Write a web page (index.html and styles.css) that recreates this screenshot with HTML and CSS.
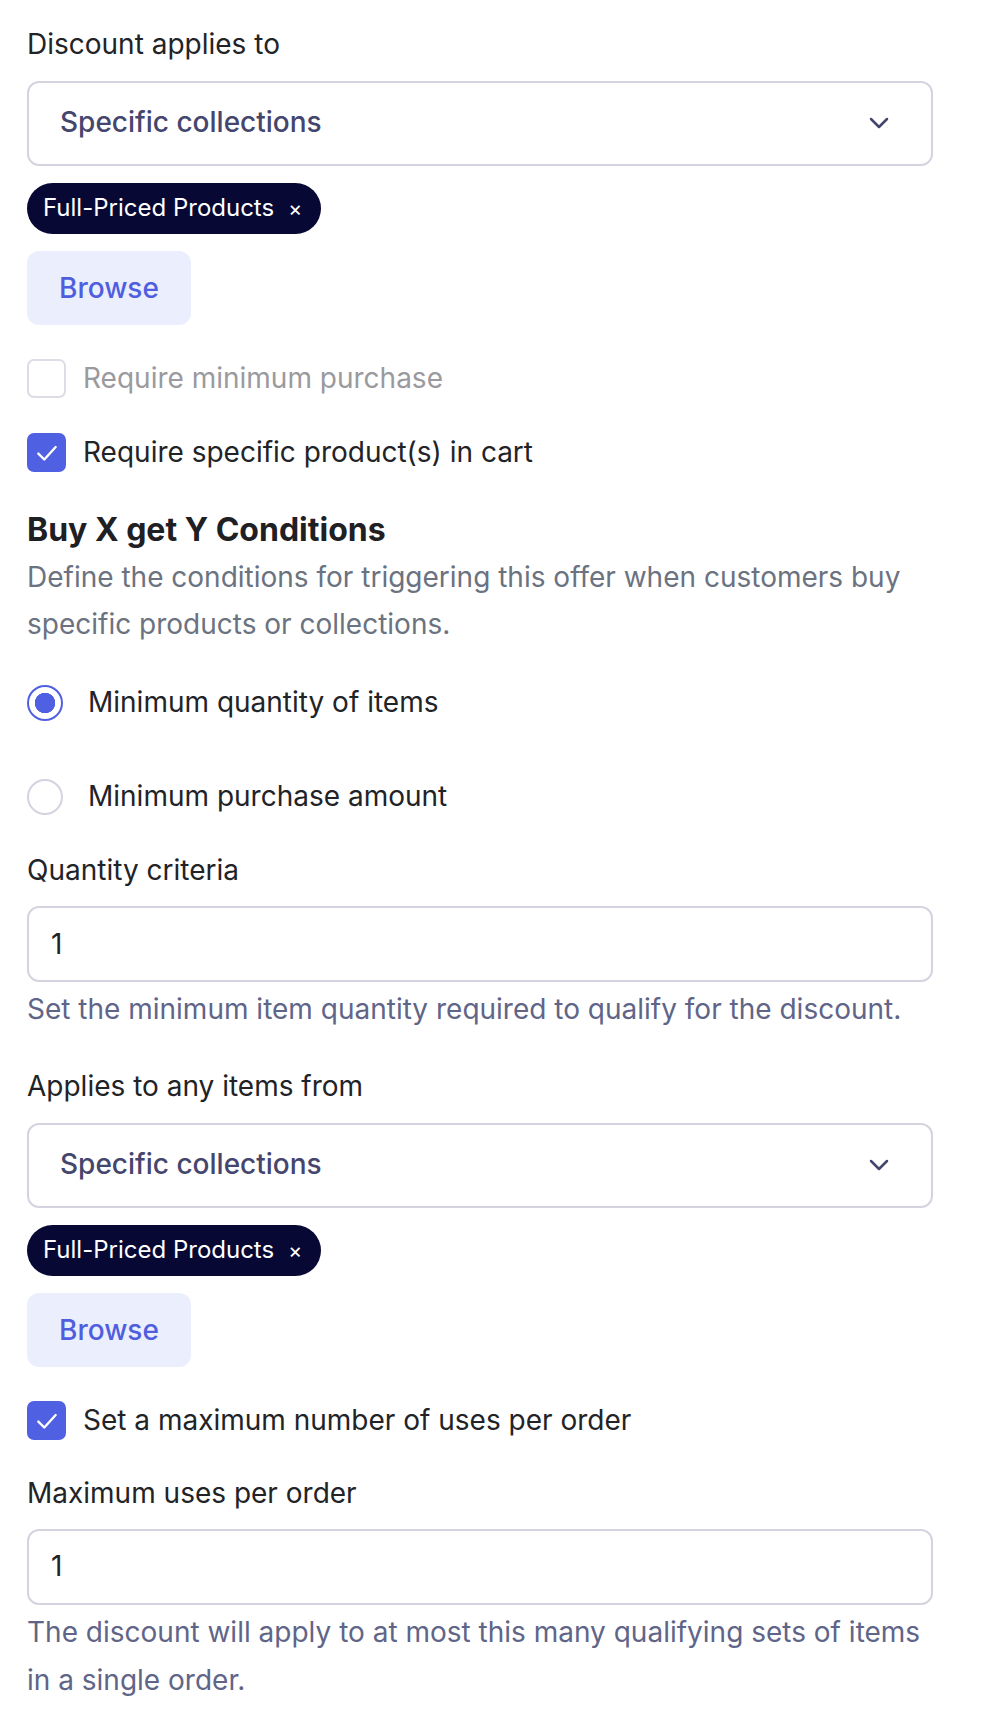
FILE: index.html
```html
<!DOCTYPE html>
<html lang="en">
  <head>
    <meta charset="UTF-8" />
    <meta name="viewport" content="width=device-width, initial-scale=1.0" />
    <title>Discount Conditions</title>
    <link rel="stylesheet" href="styles.css">
  </head>
  <body>
    <form class="form">
      <div class="field">
        <label class="label">Discount applies to</label>
        <div class="select">
          <span class="select-value">Specific collections</span>
          <svg class="chevron" width="20" height="12" viewBox="0 0 20 12">
            <polyline points="2,2 10,10 18,2" />
          </svg>
        </div>
        <div class="tags">
          <span class="chip">Full-Priced Products <span class="chip-x">×</span></span>
        </div>
        <button type="button" class="browse">Browse</button>
      </div>

      <div class="checks">
        <div class="check-row disabled">
          <span class="checkbox"></span>
          <span>Require minimum purchase</span>
        </div>
        <div class="check-row">
          <span class="checkbox checked">
            <svg width="26" height="26" viewBox="0 0 24 24"><polyline points="4,12.5 9.5,18 20,6.5" /></svg>
          </span>
          <span>Require specific product(s) in cart</span>
        </div>
      </div>

      <h3 class="section-title">Buy X get Y Conditions</h3>
      <p class="desc">Define the conditions for triggering this offer when customers buy specific products or collections.</p>

      <div class="radios">
        <div class="radio-row">
          <span class="radio selected"></span>
          <span>Minimum quantity of items</span>
        </div>
        <div class="radio-row">
          <span class="radio"></span>
          <span>Minimum purchase amount</span>
        </div>
      </div>

      <div class="field after-radios">
        <label class="label">Quantity criteria</label>
        <div class="input">1</div>
        <p class="help">Set the minimum item quantity required to qualify for the discount.</p>
      </div>

      <div class="field spaced-lg">
        <label class="label">Applies to any items from</label>
        <div class="select">
          <span class="select-value">Specific collections</span>
          <svg class="chevron" width="20" height="12" viewBox="0 0 20 12">
            <polyline points="2,2 10,10 18,2" />
          </svg>
        </div>
        <div class="tags">
          <span class="chip">Full-Priced Products <span class="chip-x">×</span></span>
        </div>
        <button type="button" class="browse">Browse</button>
      </div>

      <div class="checks">
        <div class="check-row">
          <span class="checkbox checked">
            <svg width="26" height="26" viewBox="0 0 24 24"><polyline points="4,12.5 9.5,18 20,6.5" /></svg>
          </span>
          <span>Set a maximum number of uses per order</span>
        </div>
      </div>

      <div class="field spaced">
        <label class="label">Maximum uses per order</label>
        <div class="input">1</div>
        <p class="help">The discount will apply to at most this many qualifying sets of items in a single order.</p>
      </div>
    </form>
  </body>
</html>
```

FILE: styles.css
```css
body {
  margin: 0;
  padding: 21px 55px 40px 27px;
  font-family: Inter, "Noto Sans", sans-serif;
  font-size: 28px;
  line-height: 1.7;
  color: #222327;
  background: #fff;
}
.form {
  display: flex;
  flex-direction: column;
}
.field {
  display: flex;
  flex-direction: column;
  align-items: flex-start;
}
.field.spaced {
  margin-top: 25px;
}
.field.after-radios {
  margin-top: 26px;
}
.field.spaced-lg {
  margin-top: 29px;
}
.label {
  display: block;
  margin-bottom: 12px;
}
.select {
  box-sizing: border-box;
  width: 100%;
  height: 85px;
  display: flex;
  align-items: center;
  justify-content: space-between;
  padding: 0 42px 0 31px;
  border: 2px solid #d3d4e0;
  border-radius: 12px;
}
.select-value {
  font-weight: 500;
  color: #45466d;
}
.chevron polyline {
  fill: none;
  stroke: #45466d;
  stroke-width: 2.5;
  stroke-linecap: round;
  stroke-linejoin: round;
}
.tags {
  margin-top: 17px;
  display: flex;
}
.chip {
  display: inline-flex;
  align-items: center;
  gap: 14px;
  height: 51px;
  padding: 0 19px 0 16px;
  border-radius: 26px;
  background-color: #080834;
  color: #fff;
  font-size: 24px;
  line-height: 1;
}
.chip-x {
  font-size: 21px;
}
.browse {
  margin-top: 17px;
  height: 74px;
  padding: 0 32px;
  border: none;
  border-radius: 12px;
  background-color: #ebeefd;
  color: #4f5ddf;
  font-family: inherit;
  font-size: 28px;
  font-weight: 500;
}
.checks {
  margin-top: 30px;
  display: flex;
  flex-direction: column;
  gap: 26px;
}
.check-row {
  display: flex;
  align-items: center;
  gap: 17px;
  height: 48px;
}
.check-row.disabled {
  color: #9a9a9e;
}
.checkbox {
  box-sizing: border-box;
  width: 39px;
  height: 39px;
  border: 2px solid #dcdde5;
  border-radius: 7px;
  display: flex;
  align-items: center;
  justify-content: center;
}
.checkbox.checked {
  border-color: #5060e3;
  background-color: #5060e3;
}
.checkbox polyline {
  fill: none;
  stroke: #fff;
  stroke-width: 2.2;
  stroke-linecap: round;
  stroke-linejoin: round;
}
.section-title {
  margin: 29px 0 0;
  font-size: 32px;
  line-height: 48px;
  font-weight: 700;
  color: #1f2024;
}
.desc {
  margin: 0;
  color: #6b7280;
}
.radios {
  margin-top: 30px;
  display: flex;
  flex-direction: column;
  gap: 46px;
}
.radio-row {
  display: flex;
  align-items: center;
  gap: 25px;
  height: 48px;
}
.radio {
  box-sizing: border-box;
  width: 36px;
  height: 36px;
  border: 2px solid #d3d4e0;
  border-radius: 50%;
}
.radio.selected {
  border: 2.5px solid #5060e3;
  background: radial-gradient(circle, #5060e3 0 10px, #fff 10.5px);
}
.input {
  box-sizing: border-box;
  width: 100%;
  height: 76px;
  display: flex;
  align-items: center;
  padding: 0 22px;
  border: 2px solid #d3d4e0;
  border-radius: 12px;
}
.help {
  margin: 4px 0 0;
  color: #606588;
}
```
